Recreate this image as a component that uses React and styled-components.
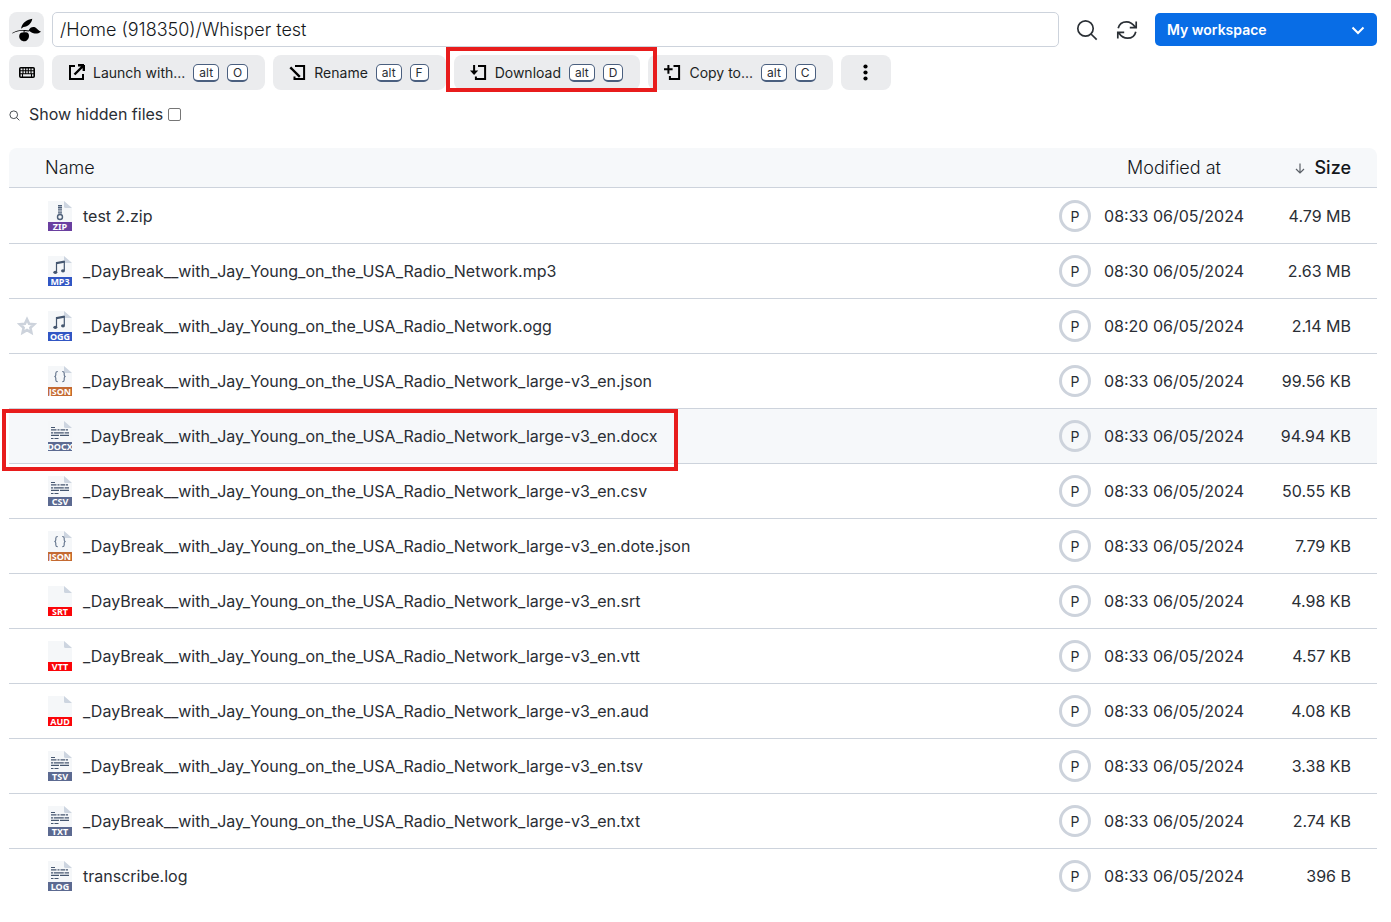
import React from "react";
import styled, { createGlobalStyle, css } from "styled-components";

const GlobalStyle = createGlobalStyle`
  *, *::before, *::after { box-sizing: border-box; }
  body {
    margin: 0;
    background: #fff;
    color: #2a2e35;
    font-family: Inter, "Liberation Sans", sans-serif;
    font-size: 16px;
    font-weight: 400;
  }
  button, input, select { font: inherit; color: inherit; }
`;

const Page = styled.main`
  padding: 12px 14px 0 9px;
`;

const LocationBar = styled.header`
  display: flex;
  align-items: center;
  gap: 8px;
  height: 35px;
`;

const SquareButton = styled.button`
  display: flex;
  align-items: center;
  justify-content: center;
  flex: none;
  width: 35px;
  height: 35px;
  padding: 0;
  border: 0;
  border-radius: 8px;
  background: #ebecee;
`;

const PathInput = styled.input`
  flex: 1;
  min-width: 0;
  height: 35px;
  padding: 0 7px;
  border: 1px solid #cdd3dc;
  border-radius: 5px;
  background: #fff;
  color: #14171b;
  font-size: 18px;
  font-weight: 300;
  outline: none;
`;

const Tools = styled.div`
  display: flex;
  gap: 16px;
  padding: 0 8px;
`;

const IconButton = styled.button`
  display: flex;
  padding: 0;
  border: 0;
  width: 24px;
  height: 24px;
  align-items: center;
  justify-content: center;
  background: none;
`;

const ProjectPicker = styled.div`
  position: relative;
  flex: none;
  width: 222px;
  svg {
    position: absolute;
    right: 12px;
    top: 13px;
    pointer-events: none;
  }
`;

const ProjectSelect = styled.select`
  display: block;
  appearance: none;
  width: 100%;
  height: 33px;
  padding: 0 12px;
  border: 0;
  border-radius: 5px;
  background: #086de6;
  color: #fff;
  font-size: 14px;
  font-weight: 600;
`;

const Toolbar = styled.div`
  display: flex;
  gap: 8px;
  margin-top: 8px;
`;

const Operation = styled.button`
  display: flex;
  align-items: center;
  gap: 8px;
  height: 35px;
  padding: 0 17px 0 16px;
  border: 0;
  border-radius: 8px;
  background: #ebecee;
  color: #1c1f24;
  font-size: 14px;
  white-space: nowrap;
`;

const Key = styled.kbd`
  height: 18px;
  padding: 0 5px;
  border: 1px solid #4a5f7f;
  border-bottom-width: 2px;
  border-radius: 5px;
  background: #fff;
  color: #2a2e35;
  font-family: inherit;
  font-size: 12px;
  line-height: 15px;
`;

const Marked = styled.div`
  position: relative;
`;

const Outline = styled.span`
  position: absolute;
  z-index: 1;
  border: 4px solid #e81c1c;
  pointer-events: none;
  ${(p) =>
    p.$around === "button"
      ? css`
          inset: -8px -17px -2px -8px;
        `
      : css`
          top: 0;
          left: -7px;
          width: 676px;
          height: 62px;
        `}
`;

const Filter = styled.label`
  display: flex;
  align-items: center;
  width: max-content;
  height: 20px;
  margin-top: 14px;
  svg { margin: 3px 9px 0 0; }
`;

const Checkbox = styled.input`
  appearance: none;
  width: 13px;
  height: 13px;
  margin: 0 0 0 5px;
  border: 1px solid #767676;
  border-radius: 2px;
  background: #fff;
`;

const FileTable = styled.table`
  width: 100%;
  margin-top: 24px;
  table-layout: fixed;
  border-collapse: separate;
  border-spacing: 0;
`;

const Column = styled.col`
  width: ${(p) => p.$width};
`;

const HeadCell = styled.th`
  height: 40px;
  padding: 0 ${(p) => (p.$align === "right" ? "26px" : 0)} 0 0;
  border-bottom: 1px solid #cdd3dc;
  background: #f6f8fa;
  color: #14171b;
  font-size: 18px;
  font-weight: ${(p) => (p.$sorted ? 500 : 300)};
  text-align: ${(p) => p.$align || "left"};
  &:first-child { border-top-left-radius: 8px; }
  &:last-child { border-top-right-radius: 8px; }
  svg { margin-right: 9px; }
`;

const Cell = styled.td`
  position: relative;
  height: 55px;
  padding: 0 ${(p) => (p.$align === "right" ? "26px" : 0)} 0 0;
  border-bottom: 1px solid #cdd3dc;
  text-align: ${(p) => p.$align || "left"};
  white-space: nowrap;
`;

const FileRow = styled.tr`
  background: ${(p) => (p.$active ? "#f6f8fa" : "transparent")};
  &:first-child ${Cell} { height: 56px; padding-top: 1px; }
  &:last-child ${Cell} { border-bottom-color: transparent; }
`;

const FileLabel = styled.div`
  display: flex;
  align-items: center;
  gap: 8px;
`;

const StarButton = styled(IconButton)`
  margin: 0 6px;
`;

const Avatar = styled.div`
  display: flex;
  align-items: center;
  justify-content: center;
  width: 32px;
  height: 32px;
  border: 3px solid #cdd3dc;
  border-radius: 50%;
  font-size: 14px;
`;

const FileIconSvg = styled.svg`
  overflow: visible;
`;

const BerryIcon = () => (
  <svg width="29" height="24" viewBox="0 0 29 24" fill="#000">
    <path d="M.2 15C4 12.500 8 11.500 13 12l4 .6-.1.8-4.400-.4C8 12.500 4.500 13.500.5 15.500Z" />
    <path d="M9.500 8.800C11 4.500 15 1.800 20.300.8 19.500 5.500 16 8.800 11.500 9L9 10.800Z" />
    <path d="M16.500 12.500C18 9.500 20.500 8.500 23 9.300c2 .8 3.300 3.400 6 4.400-2.500 1.800-5 2.200-7.500 1.500-2-.5-3.500-1.700-5-2.700Z" />
    <path d="m11.700 12.300 1 .1-.2 2.200c2.500-1 4.700.7 4.500 3.400-.2 3.200-2.300 5.300-4.700 5.300-3 0-5.100-2.300-5.100-5 0-2.900 2-4.400 4.300-3.700Z" />
  </svg>
);

const KeyboardIcon = () => (
  <svg width="16" height="11" viewBox="0 0 16 11">
    <rect x=".8" y=".8" width="14.400" height="9.400" rx="1" fill="none" stroke="#000" strokeWidth="1.600" />
    <path d="M1 3.800h14M1 6.800h14M4 1v6M6.700 1v6M9.300 1v6M12 1v6M3.500 7v3M12.500 7v3" stroke="#000" strokeWidth="1.100" />
  </svg>
);

const SearchIcon = ({ size = 22, stroke = 1.7 }) => (
  <svg width={size} height={size} viewBox="0 0 22 22" fill="none" stroke="#2b3036" strokeWidth={stroke}>
    <circle cx="9.500" cy="9.500" r="7.700" />
    <path d="m15 15 5.700 5.700" />
  </svg>
);

const RefreshIcon = () => (
  <svg width="22" height="22" viewBox="0 0 22 22" fill="none" stroke="#2b3036" strokeWidth="1.700">
    <path d="M2.200 9.300C3.200 5 6.800 2.800 10.500 2.800c4 0 6.500 2 8.700 5.200M20.200 2.500v6.200h-6.400M19.800 12.700c-1 4.300-4.600 6.500-8.300 6.500-4 0-6.500-2-8.700-5.200M1.800 19.500v-6.200h6.400" />
  </svg>
);

const ChevronIcon = () => (
  <svg width="14" height="9" viewBox="0 0 14 9" fill="none" stroke="#fff" strokeWidth="2">
    <path d="m1.500 1.500 5.500 5.500 5.500-5.500" />
  </svg>
);

const iconPaths = {
  launch: (
    <>
      <path d="M7 2H2v13h13v-5" />
      <path d="M10 1.200h6m-.2-.2v6M6.500 10.500 15 2" strokeWidth="2.400" />
    </>
  ),
  rename: (
    <>
      <path d="M6 1.900h9.100v13.200H5.500V12.500" />
      <path d="M1.300 3.300 3.100 5.100M3 5l7.800 7.800" strokeWidth="2.400" />
    </>
  ),
  download: (
    <>
      <path d="M8 2h7.100v13H5.900v-2.500M4.100 1v7.500" />
      <path d="M0 6.500h8.200L4.100 11Z" fill="#000" stroke="none" />
    </>
  ),
  copy: (
    <>
      <path d="M9.500 2h5.600v13.100H5.900V12M0 5.300h8.600M4.400 1v8.700" />
    </>
  ),
};

const OperationIcon = ({ name }) => (
  <svg width="17" height="17" viewBox="0 0 17 17" fill="none" stroke="#000" strokeWidth="2">
    {iconPaths[name]}
  </svg>
);

const DotsIcon = () => (
  <svg width="17" height="17" viewBox="0 0 17 17" fill="#000">
    <circle cx="8.500" cy="2.500" r="2.100" />
    <circle cx="8.500" cy="8.500" r="2.100" />
    <circle cx="8.500" cy="14.500" r="2.100" />
  </svg>
);

const StarIcon = () => (
  <svg width="20" height="20" viewBox="0 0 20 20" fill="none" stroke="#cdd3dc" strokeWidth="2.600">
    <path d="m10 3.200 2.100 4.500 5 .6-3.700 3.400 1 4.900-4.400-2.500-4.400 2.500 1-4.900-3.700-3.400 5-.6Z" />
  </svg>
);

const SortIcon = () => (
  <svg width="10" height="11" viewBox="0 0 10 11" fill="none" stroke="#5c6168" strokeWidth="1.200">
    <path d="M5 .5v9M1 6l4 4 4-4" />
  </svg>
);

const fileArt = {
  archive: {
    color: "#6a3fa0",
    art: (
      <g fill="none" stroke="#4d5f78">
        <path d="M12 4v9" strokeWidth="4" strokeDasharray="1.200 .6" />
        <circle cx="12" cy="16" r="2.500" strokeWidth="1.400" />
      </g>
    ),
  },
  audio: {
    color: "#3156c4",
    art: (
      <g fill="#44566f">
        <path d="M8.500 6 16.500 4.500v2.200L8.500 8.200Z" />
        <path d="M8.500 6v10M16.300 5v9.500" stroke="#44566f" strokeWidth="1.200" />
        <ellipse cx="7.300" cy="16.300" rx="2" ry="1.600" />
        <ellipse cx="15" cy="14.800" rx="2" ry="1.600" />
      </g>
    ),
  },
  code: {
    color: "#c46a32",
    art: (
      <path
        d="M9.800 5.500c-1.700 0-2 .6-2 1.800v1.600c0 1-.4 1.500-1.400 1.600 1 .1 1.400.6 1.400 1.600v1.900c0 1.200.3 1.800 2 1.800M14.200 5.500c1.700 0 2 .6 2 1.800v1.600c0 1 .4 1.500 1.400 1.600-1 .1-1.400.6-1.400 1.600v1.900c0 1.200-.3 1.800-2 1.800"
        fill="none"
        stroke="#5e6f88"
        strokeWidth="1.100"
      />
    ),
  },
  text: {
    color: "#5c6a91",
    art: (
      <path
        d="M3 6.500h4M3 8.800h5.500m1 0h2m1 0h4.500m.7 0h2.300M3 11.800h2m.8 0h10m.8 0h4.400M3 14.300h8m1 0h9M3 17.500h2.500m1 0h4"
        fill="none"
        stroke="#45566f"
        strokeWidth="1.200"
      />
    ),
  },
  plain: { color: "#fb0509", art: null },
};

const FileIcon = ({ kind, ext }) => (
  <FileIconSvg width="30" height="30" viewBox="-3 0 30 30">
    <path d="M0 0h16l8 7v23H0Z" fill="#f5f7f9" />
    <path d="m16 0 8 7h-6.500Q16 7 16 5.500Z" fill="#cdd5e0" />
    {fileArt[kind].art}
    <rect y="21" width="24" height="9" fill={fileArt[kind].color} />
    <text x="12" y="29" textAnchor="middle" fontFamily="Noto Sans, sans-serif" fontSize="9" fontWeight="700" fill="#fff">
      {ext}
    </text>
  </FileIconSvg>
);

const base = "_DayBreak__with_Jay_Young_on_the_USA_Radio_Network";

const files = [
  { name: "test 2.zip", kind: "archive", ext: "ZIP", size: "4.79 MB" },
  { name: `${base}.mp3`, kind: "audio", ext: "MP3", time: "08:30", size: "2.63 MB" },
  { name: `${base}.ogg`, kind: "audio", ext: "OGG", time: "08:20", size: "2.14 MB", star: true },
  { name: `${base}_large-v3_en.json`, kind: "code", ext: "JSON", size: "99.56 KB" },
  { name: `${base}_large-v3_en.docx`, kind: "text", ext: "DOCX", size: "94.94 KB", active: true },
  { name: `${base}_large-v3_en.csv`, kind: "text", ext: "CSV", size: "50.55 KB" },
  { name: `${base}_large-v3_en.dote.json`, kind: "code", ext: "JSON", size: "7.79 KB" },
  { name: `${base}_large-v3_en.srt`, kind: "plain", ext: "SRT", size: "4.98 KB" },
  { name: `${base}_large-v3_en.vtt`, kind: "plain", ext: "VTT", size: "4.57 KB" },
  { name: `${base}_large-v3_en.aud`, kind: "plain", ext: "AUD", size: "4.08 KB" },
  { name: `${base}_large-v3_en.tsv`, kind: "text", ext: "TSV", size: "3.38 KB" },
  { name: `${base}_large-v3_en.txt`, kind: "text", ext: "TXT", size: "2.74 KB" },
  { name: "transcribe.log", kind: "text", ext: "LOG", size: "396 B" },
];

const OperationButton = ({ icon, label, shortcut }) => (
  <Operation type="button">
    <OperationIcon name={icon} />
    <span>{label}</span>
    <Key>alt</Key>
    <Key>{shortcut}</Key>
  </Operation>
);

export default function App() {
  return (
    <Page>
      <GlobalStyle />
      <LocationBar>
        <SquareButton type="button" aria-label="Drive">
          <BerryIcon />
        </SquareButton>
        <PathInput aria-label="Path" defaultValue="/Home (918350)/Whisper test" />
        <Tools>
          <IconButton type="button" aria-label="Search">
            <SearchIcon />
          </IconButton>
          <IconButton type="button" aria-label="Refresh">
            <RefreshIcon />
          </IconButton>
        </Tools>
        <ProjectPicker>
          <ProjectSelect aria-label="Project">
            <option>My workspace</option>
          </ProjectSelect>
          <ChevronIcon />
        </ProjectPicker>
      </LocationBar>

      <Toolbar>
        <SquareButton type="button" aria-label="Keyboard shortcuts">
          <KeyboardIcon />
        </SquareButton>
        <OperationButton icon="launch" label="Launch with..." shortcut="O" />
        <OperationButton icon="rename" label="Rename" shortcut="F" />
        <Marked>
          <OperationButton icon="download" label="Download" shortcut="D" />
          <Outline $around="button" />
        </Marked>
        <OperationButton icon="copy" label="Copy to..." shortcut="C" />
        <Operation type="button" aria-label="More">
          <DotsIcon />
        </Operation>
      </Toolbar>

      <Filter>
        <SearchIcon size={11} />
        Show hidden files
        <Checkbox type="checkbox" />
      </Filter>

      <FileTable>
        <colgroup>
          <Column $width="36px" />
          <Column $width="auto" />
          <Column $width="32px" />
          <Column $width="166px" />
          <Column $width="120px" />
        </colgroup>
        <thead>
          <tr>
            <HeadCell />
            <HeadCell>Name</HeadCell>
            <HeadCell />
            <HeadCell $align="center">Modified at</HeadCell>
            <HeadCell $align="right" $sorted>
              <SortIcon />
              Size
            </HeadCell>
          </tr>
        </thead>
        <tbody>
          {files.map((f) => (
            <FileRow key={f.name} $active={f.active}>
              <Cell>
                {f.star && (
                  <StarButton type="button" aria-label="Add favorite">
                    <StarIcon />
                  </StarButton>
                )}
                {f.active && <Outline $around="row" />}
              </Cell>
              <Cell>
                <FileLabel>
                  <FileIcon kind={f.kind} ext={f.ext} />
                  {f.name}
                </FileLabel>
              </Cell>
              <Cell>
                <Avatar>P</Avatar>
              </Cell>
              <Cell $align="center">{f.time || "08:33"} 06/05/2024</Cell>
              <Cell $align="right">{f.size}</Cell>
            </FileRow>
          ))}
        </tbody>
      </FileTable>
    </Page>
  );
}
